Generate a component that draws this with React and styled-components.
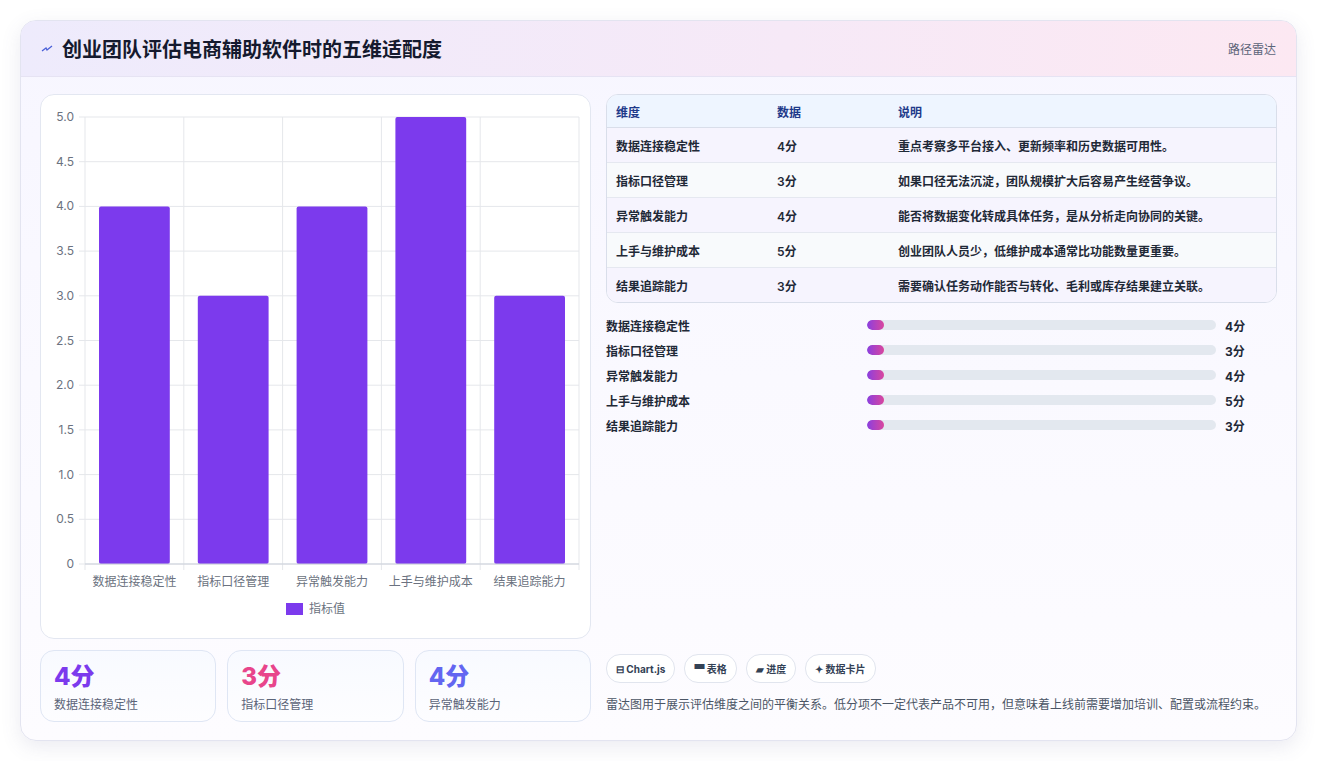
import React from 'react'
import styled, { createGlobalStyle } from 'styled-components'

const Global = createGlobalStyle`
  body { margin: 0; background: #fff; font-family: Inter, "Noto Sans CJK SC", sans-serif; }
`

const Page = styled.div`
  padding: 20px 21px 22px 20px;
`

const Card = styled.div`
  border: 1px solid #e3e4f0;
  border-radius: 16px;
  overflow: hidden;
  background: linear-gradient(180deg, #f7f6ff 0%, #fdfcff 100%);
  box-shadow: 0 6px 20px rgba(90, 90, 140, 0.12);
`

const Header = styled.div`
  height: 55px;
  display: flex;
  align-items: center;
  justify-content: space-between;
  padding: 0 20px;
  background: linear-gradient(90deg, #eeebfc 0%, #f6e9f7 60%, #fce8f2 100%);
  border-bottom: 1px solid #e6e3f3;
`

const Title = styled.h1`
  margin: 0;
  font-size: 20px;
  font-weight: 700;
  color: #151a2e;
  display: flex;
  align-items: center;
  gap: 9px;
`

const Tag = styled.span`
  font-size: 12px;
  color: #5b6478;
`

const Body = styled.div`
  display: grid;
  grid-template-columns: 551px 1fr;
  gap: 15px;
  padding: 17px 19px 18px 19px;
`

const Col = styled.div`
  display: flex;
  flex-direction: column;
`

const ChartBox = styled.div`
  height: 543px;
  background: #fff;
  border: 1px solid #e3e7f1;
  border-radius: 14px;
`

const Stats = styled.div`
  display: grid;
  grid-template-columns: repeat(3, 1fr);
  gap: 11px;
  margin-top: 11px;
`

const Stat = styled.div`
  height: 72px;
  border: 1px solid #dfe6f4;
  border-radius: 14px;
  background: linear-gradient(180deg, #f8faff, #fdfdff);
  padding: 12px 13px;
  box-sizing: border-box;
`

const StatNum = styled.div`
  font-size: 24px;
  font-weight: 800;
  color: ${p => p.color};
  line-height: 28px;
`

const StatLabel = styled.div`
  font-size: 12px;
  color: #5b6478;
  margin-top: 4px;
`

const Table = styled.table`
  width: 100%;
  border-collapse: separate;
  border-spacing: 0;
  border: 1px solid #d9deea;
  border-radius: 12px;
  overflow: hidden;
  font-size: 12px;
  background: #fff;
`

const Th = styled.th`
  text-align: left;
  height: 32px;
  padding: 0 9px;
  color: #1e3a8a;
  font-weight: 700;
  background: #eef5ff;
  border-bottom: 1px solid #d9deea;
  width: ${p => p.w || 'auto'};
`

const Td = styled.td`
  height: 34px;
  padding: 0 9px;
  color: #1f2937;
  font-weight: 600;
  background: ${p => (p.odd ? '#f6f4fe' : '#f8fafc')};
  border-top: ${p => (p.first ? 'none' : '1px solid #e5e8f0')};
`

const Bars = styled.div`
  display: flex;
  flex-direction: column;
  gap: 7px;
  margin-top: 13px;
`

const BarRow = styled.div`
  display: grid;
  grid-template-columns: 252px 349px 1fr;
  align-items: center;
  gap: 9px;
  height: 18px;
  font-size: 12px;
  font-weight: 600;
  color: #1f2937;
`

const Track = styled.div`
  height: 10px;
  border-radius: 5px;
  background: #e3e8ef;
  position: relative;
  overflow: hidden;
`

const Fill = styled.div`
  height: 100%;
  width: 17px;
  border-radius: 5px;
  background: linear-gradient(90deg, #8b3fe0, #d9469d);
`

const Val = styled.span`
  font-weight: 700;
`

const Spacer = styled.div`
  flex: 1;
`

const Chips = styled.div`
  display: flex;
  gap: 9px;
`

const Chip = styled.span`
  height: 27px;
  padding: 0 9px;
  display: inline-flex;
  align-items: center;
  gap: 3px;
  border: 1px solid #e1e5ee;
  border-radius: 14px;
  background: #fff;
  font-size: 10px;
  font-weight: 700;
  color: #334155;
`

const Note = styled.p`
  margin: 12px 0 7px;
  font-size: 12px;
  line-height: 20px;
  color: #4b5565;
`

const rows = [
  ['数据连接稳定性', 4, '重点考察多平台接入、更新频率和历史数据可用性。'],
  ['指标口径管理', 3, '如果口径无法沉淀，团队规模扩大后容易产生经营争议。'],
  ['异常触发能力', 4, '能否将数据变化转成具体任务，是从分析走向协同的关键。'],
  ['上手与维护成本', 5, '创业团队人员少，低维护成本通常比功能数量更重要。'],
  ['结果追踪能力', 3, '需要确认任务动作能否与转化、毛利或库存结果建立关联。'],
]

const Chart = () => {
  const L = 44, R = 538, T = 22, B = 469
  const h = B - T
  const w = (R - L) / 5
  const ticks = [0, 0.5, 1, 1.5, 2, 2.5, 3, 3.5, 4, 4.5, 5]
  return (
    <svg width="549" height="541" fontFamily="Inter, 'Noto Sans CJK SC', sans-serif">
      {ticks.map(t => {
        const y = B - (t / 5) * h
        return (
          <g key={t}>
            <line x1={L - 6} x2={R} y1={y} y2={y} stroke="#e5e7eb" />
            <text x={L - 11} y={y + 4} fontSize="12" fill="#6b7280" textAnchor="end">
              {t === 0 ? '0' : t.toFixed(1)}
            </text>
          </g>
        )
      })}
      {[0, 1, 2, 3, 4, 5].map(i => (
        <line key={i} x1={L + i * w} x2={L + i * w} y1={T} y2={B + 6} stroke="#e5e7eb" />
      ))}
      {rows.map((r, i) => {
        const bh = (r[1] / 5) * h
        return (
          <g key={r[0]}>
            <rect x={L + i * w + 14} y={B - bh} width={w - 28} height={bh} rx="2" fill="#7c3aed" />
            <text x={L + i * w + w / 2} y={B + 22} fontSize="12" fill="#6b7280" textAnchor="middle">
              {r[0]}
            </text>
          </g>
        )
      })}
      <line x1={L} x2={R} y1={B} y2={B} stroke="#cbd0da" />
      <rect x="245" y="508" width="17" height="12" fill="#7c3aed" />
      <text x="268" y="518" fontSize="12" fill="#6b7280">指标值</text>
    </svg>
  )
}

export default function App() {
  return (
    <>
      <Global />
      <Page>
        <Card>
          <Header>
            <Title>
              <svg width="12" height="10" viewBox="0 0 12 10">
                <path d="M1 7 L5 4 L6 6 L11 2" stroke="#4a5fd8" strokeWidth="1.3" fill="none" />
              </svg>
              创业团队评估电商辅助软件时的五维适配度
            </Title>
            <Tag>路径雷达</Tag>
          </Header>
          <Body>
            <Col>
              <ChartBox>
                <Chart />
              </ChartBox>
              <Stats>
                <Stat>
                  <StatNum color="#7c3aed">4分</StatNum>
                  <StatLabel>数据连接稳定性</StatLabel>
                </Stat>
                <Stat>
                  <StatNum color="#e8458b">3分</StatNum>
                  <StatLabel>指标口径管理</StatLabel>
                </Stat>
                <Stat>
                  <StatNum color="#6366f1">4分</StatNum>
                  <StatLabel>异常触发能力</StatLabel>
                </Stat>
              </Stats>
            </Col>
            <Col>
              <Table>
                <thead>
                  <tr>
                    <Th w="143px">维度</Th>
                    <Th w="103px">数据</Th>
                    <Th>说明</Th>
                  </tr>
                </thead>
                <tbody>
                  {rows.map((r, i) => (
                    <tr key={r[0]}>
                      <Td odd={i % 2 === 0} first={i === 0}>{r[0]}</Td>
                      <Td odd={i % 2 === 0} first={i === 0}>{r[1]}分</Td>
                      <Td odd={i % 2 === 0} first={i === 0}>{r[2]}</Td>
                    </tr>
                  ))}
                </tbody>
              </Table>
              <Bars>
                {rows.map(r => (
                  <BarRow key={r[0]}>
                    <span>{r[0]}</span>
                    <Track><Fill /></Track>
                    <Val>{r[1]}分</Val>
                  </BarRow>
                ))}
              </Bars>
              <Spacer />
              <Chips>
                <Chip>⊟ Chart.js</Chip>
                <Chip>▀ 表格</Chip>
                <Chip>▰ 进度</Chip>
                <Chip>✦ 数据卡片</Chip>
              </Chips>
              <Note>
                雷达图用于展示评估维度之间的平衡关系。低分项不一定代表产品不可用，但意味着上线前需要增加培训、配置或流程约束。
              </Note>
            </Col>
          </Body>
        </Card>
      </Page>
    </>
  )
}
